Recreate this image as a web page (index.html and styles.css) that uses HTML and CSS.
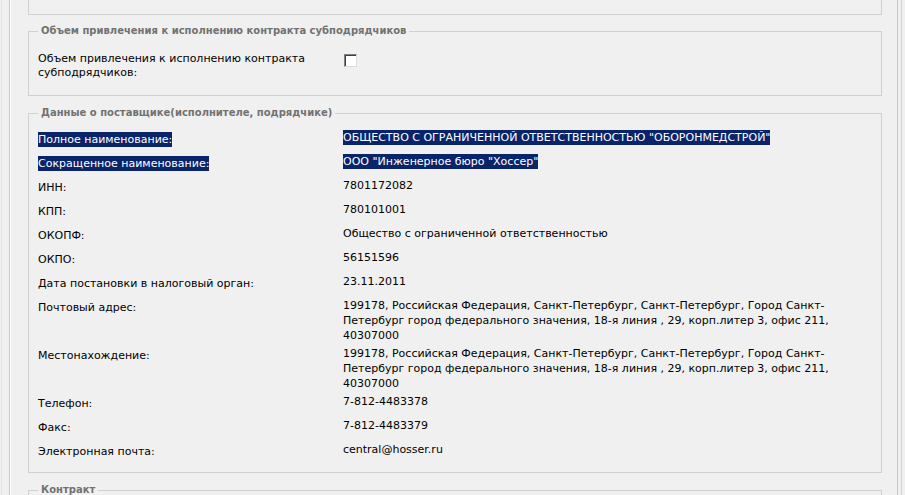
FILE: index.html
```html
<!DOCTYPE html>
<html lang="ru">
<head>
    <meta charset="UTF-8">
    <title>Данные о поставщике</title>
    <link rel="stylesheet" href="styles.css">
</head>
<body>
    <div class="outer">
        <div class="frame">
            <!-- хвост предыдущего блока (страница прокручена) -->
            <fieldset class="group group-cut"></fieldset>

            <fieldset class="group">
                <legend>Объем привлечения к исполнению контракта субподрядчиков</legend>
                <div class="row row-check">
                    <div class="label">Объем привлечения к исполнению контракта субподрядчиков:</div>
                    <div class="value"><input type="checkbox" class="check"></div>
                </div>
            </fieldset>

            <fieldset class="group">
                <legend>Данные о поставщике(исполнителе, подрядчике)</legend>
                <div class="row">
                    <div class="label"><span class="selected">Полное наименование:</span></div>
                    <div class="value"><span class="selected">ОБЩЕСТВО С ОГРАНИЧЕННОЙ ОТВЕТСТВЕННОСТЬЮ "ОБОРОНМЕДСТРОЙ"</span></div>
                </div>
                <div class="row">
                    <div class="label"><span class="selected">Сокращенное наименование:</span></div>
                    <div class="value"><span class="selected">ООО "Инженерное бюро "Хоссер"</span></div>
                </div>
                <div class="row">
                    <div class="label">ИНН:</div>
                    <div class="value">7801172082</div>
                </div>
                <div class="row">
                    <div class="label">КПП:</div>
                    <div class="value">780101001</div>
                </div>
                <div class="row">
                    <div class="label">ОКОПФ:</div>
                    <div class="value">Общество с ограниченной ответственностью</div>
                </div>
                <div class="row">
                    <div class="label">ОКПО:</div>
                    <div class="value">56151596</div>
                </div>
                <div class="row">
                    <div class="label">Дата постановки в налоговый орган:</div>
                    <div class="value">23.11.2011</div>
                </div>
                <div class="row">
                    <div class="label">Почтовый адрес:</div>
                    <div class="value">199178, Российская Федерация, Санкт-Петербург, Санкт-Петербург, Город Санкт-Петербург город федерального значения, 18-я линия , 29, корп.литер 3, офис 211, 40307000</div>
                </div>
                <div class="row">
                    <div class="label">Местонахождение:</div>
                    <div class="value">199178, Российская Федерация, Санкт-Петербург, Санкт-Петербург, Город Санкт-Петербург город федерального значения, 18-я линия , 29, корп.литер 3, офис 211, 40307000</div>
                </div>
                <div class="row">
                    <div class="label">Телефон:</div>
                    <div class="value">7-812-4483378</div>
                </div>
                <div class="row">
                    <div class="label">Факс:</div>
                    <div class="value">7-812-4483379</div>
                </div>
                <div class="row">
                    <div class="label">Электронная почта:</div>
                    <div class="value">central@hosser.ru</div>
                </div>
            </fieldset>

            <fieldset class="group">
                <legend>Контракт</legend>
                <div class="row">
                    <div class="label">Номер контракта:</div>
                    <div class="value">&nbsp;</div>
                </div>
            </fieldset>
        </div>
    </div>
</body>
</html>
```

FILE: styles.css
```css
/* базовые стили */
* {
    box-sizing: border-box;
}

html,
body {
    margin: 0;
    height: 100%;
    overflow: hidden;
}

body {
    background: #f0f0f0;
    color: #000;
    font-family: "DejaVu Sans", Tahoma, sans-serif;
    font-size: 11px;
}

/* рамки страницы */
.outer {
    height: 100%;
    margin: 0 3px 0 1px;
    padding: 0 3px 0 7px;
    border-left: 1px solid #e2e2e2;
    border-right: 1px solid #d4d4d4;
}

.frame {
    height: 100%;
    border-left: 1px solid #c8c8c8;
    border-right: 1px solid #c8c8c8;
    box-shadow: inset 1px 0 0 #fff;
}

/* группы полей */
.group {
    min-width: 0;
    margin: 0 15px 10px 18px;
    padding: 8px 9px 8px 9px;
    border: 1px solid #d0d0d0;
}

.group legend {
    padding: 0 3px;
    color: #727272;
    font-size: 10px;
    font-weight: bold;
    line-height: 14px;
}

.group-cut {
    height: 15px;
    margin-bottom: 9px;
    padding: 0;
    border-top: none;
}

/* строки */
.row {
    display: grid;
    grid-template-columns: 305px 1fr;
    align-items: start;
}

.row-check {
    margin: 1px 0 2px;
}

.label {
    padding: 5px 0;
    line-height: 14px;
}

.value {
    padding: 2px 0 1px;
    line-height: 15px;
}

/* выделенный текст */
.selected {
    padding: 1px 0;
    background: #0a246a;
    color: #fff;
}

.check {
    display: block;
    appearance: none;
    width: 13px;
    height: 13px;
    margin: 5px 0 0 1px;
    background: #fff;
    border: 1px solid;
    border-color: #808080 #dcdcdc #dcdcdc #808080;
    box-shadow: inset 1px 1px 0 #404040;
}
```
